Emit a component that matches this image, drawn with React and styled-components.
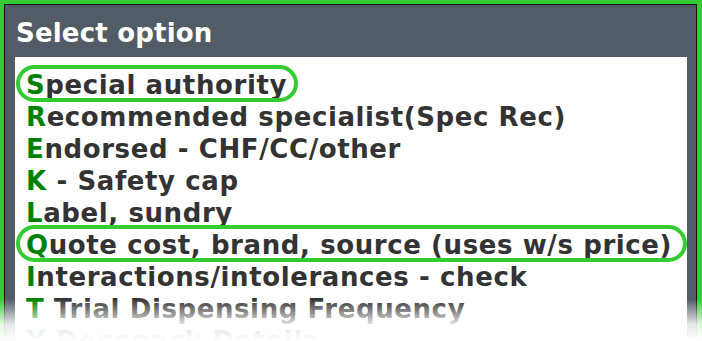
import React from 'react'
import styled, { createGlobalStyle } from 'styled-components'

const GlobalStyle = createGlobalStyle`
  html, body {
    margin: 0;
    padding: 0;
    background: #ffffff;
    overflow: hidden;
  }
`

const Page = styled.div`
  position: relative;
  width: 702px;
  height: 341px;
  overflow: hidden;
  font-family: "DejaVu Sans", Verdana, sans-serif;
`

const Frame = styled.div`
  border: 4px solid #33cc33;
  border-right-width: 5px;
  border-bottom: none;
  height: 400px;
`

const Dialog = styled.div`
  border: 1px solid #111;
  border-bottom: none;
  background: #525c66;
  height: 100%;
  padding: 12px 9px 0 10px;
  display: flex;
  flex-direction: column;
  gap: 8px;
`

const Title = styled.h1`
  margin: 0;
  color: #ffffff;
  font-size: 26px;
  line-height: 32px;
  font-weight: bold;
  letter-spacing: 0.2px;
  padding-left: 1px;
`

const List = styled.div`
  background: #ffffff;
  flex: 1;
  padding: 12px 0 0 11px;
  display: flex;
  flex-direction: column;
`

const Row = styled.div`
  position: relative;
  font-size: 26px;
  line-height: 32px;
  font-weight: bold;
  letter-spacing: 0.6px;
  color: #333333;
  white-space: nowrap;

  &::before {
    content: '';
    display: ${p => (p.$circled ? 'block' : 'none')};
    position: absolute;
    left: -10px;
    top: -4px;
    width: ${p => p.$ring}px;
    height: 37px;
    border: 4px solid #33cc33;
    border-radius: 20px;
    box-sizing: border-box;
  }
`

const Key = styled.span`
  color: #008000;
`

const Fade = styled.div`
  position: absolute;
  left: 0;
  right: 0;
  bottom: 0;
  height: 42px;
  background: linear-gradient(to bottom, rgba(255,255,255,0) 0%, rgba(255,255,255,0.85) 60%, #ffffff 100%);
  pointer-events: none;
`

const options = [
  { key: 'S', rest: 'pecial authority', ring: 282 },
  { key: 'R', rest: 'ecommended specialist(Spec Rec)' },
  { key: 'E', rest: 'ndorsed - CHF/CC/other' },
  { key: 'K', rest: ' - Safety cap' },
  { key: 'L', rest: 'abel, sundry' },
  { key: 'Q', rest: 'uote cost, brand, source (uses w/s price)', ring: 671 },
  { key: 'I', rest: 'nteractions/intolerances - check' },
  { key: 'T', rest: ' Trial Dispensing Frequency' },
  { key: 'X', rest: ' Dosepack Details' },
]

export default function App() {
  return (
    <Page>
      <GlobalStyle />
      <Frame>
        <Dialog>
          <Title>Select option</Title>
          <List>
            {options.map(o => (
              <Row key={o.key} $circled={!!o.ring} $ring={o.ring}>
                <Key>{o.key}</Key>{o.rest}
              </Row>
            ))}
          </List>
        </Dialog>
      </Frame>
      <Fade />
    </Page>
  )
}
